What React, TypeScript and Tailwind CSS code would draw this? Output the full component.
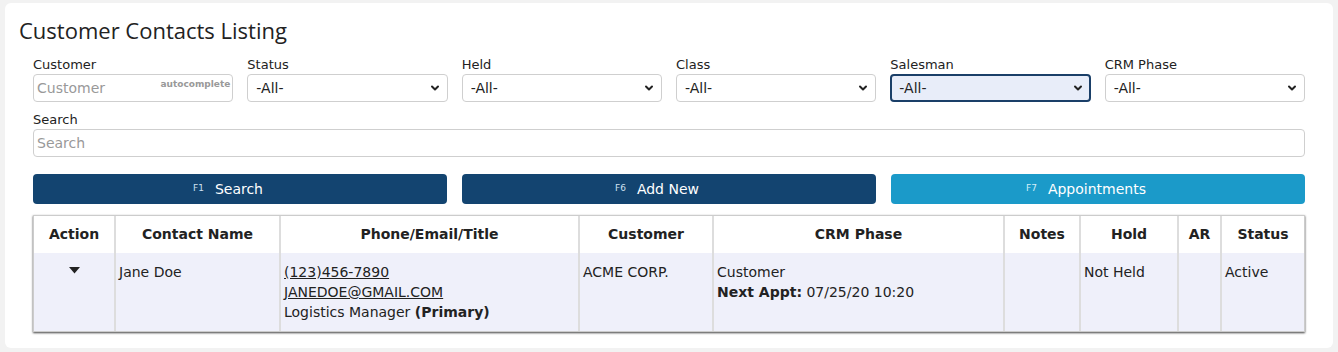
import { ChevronDown } from 'lucide-react'

const filters = ['Status', 'Held', 'Class', 'Salesman', 'CRM Phase']

const cols = [
  { name: 'Action', w: 'w-[80px]' },
  { name: 'Contact Name', w: 'w-[165px]' },
  { name: 'Phone/Email/Title', w: 'w-[299px]' },
  { name: 'Customer', w: 'w-[134px]' },
  { name: 'CRM Phase', w: 'w-[291px]' },
  { name: 'Notes', w: 'w-[76px]' },
  { name: 'Hold', w: 'w-[98px]' },
  { name: 'AR', w: 'w-[43px]' },
  { name: 'Status', w: 'w-[84px]' },
]

function Select({ label, focused }: { label: string; focused?: boolean }) {
  return (
    <div className="flex flex-col">
      <label className="h-[19px] text-[13px] leading-[19px] text-[#222]">{label}</label>
      <div className="relative">
        <select
          className={
            focused
              ? 'h-[28px] w-full appearance-none rounded-[4px] border-2 border-[#1a3f68] bg-[#e8edf9] pl-[7px] text-[14px] text-[#222] outline-none'
              : 'h-[28px] w-full appearance-none rounded-[4px] border border-[#cfcfcf] bg-white pl-[8px] text-[14px] text-[#222] outline-none'
          }
          defaultValue="all"
        >
          <option value="all">-All-</option>
        </select>
        <ChevronDown className="pointer-events-none absolute right-[7px] top-[8px] h-[12px] w-[12px] text-[#222]" strokeWidth={4} />
      </div>
    </div>
  )
}

export default function App() {
  return (
    <div className="min-h-[352px] bg-[#f2f2f2] px-[5px] pt-[3px] pb-[5px] font-['DejaVu_Sans',sans-serif]">
      <div className="rounded-[6px] bg-white pb-[16px]">
        <h1 className="px-[14px] pt-[13px] pb-[10px] font-['Open_Sans',sans-serif] text-[22px] leading-[29px] text-[#222]">
          Customer Contacts Listing
        </h1>
        <div className="px-[28px]">
          <div className="grid grid-cols-6 gap-x-[14px]">
            <div className="flex flex-col">
              <label className="h-[19px] text-[13px] leading-[19px] text-[#222]">Customer</label>
              <div className="relative">
                <input
                  placeholder="Customer"
                  className="h-[28px] w-full rounded-[4px] border border-[#cfcfcf] bg-white pl-[3px] text-[14px] text-[#222] outline-none placeholder:text-[#999]"
                />
                <span className="pointer-events-none absolute right-[3px] top-[4px] text-[9px] font-bold text-[#999]">
                  autocomplete
                </span>
              </div>
            </div>
            {filters.map((f) => (
              <Select key={f} label={f} focused={f === 'Salesman'} />
            ))}
          </div>
          <div className="mt-[8px] flex flex-col">
            <label className="h-[19px] text-[13px] leading-[19px] text-[#222]">Search</label>
            <input
              placeholder="Search"
              className="h-[28px] w-full rounded-[4px] border border-[#cfcfcf] bg-white pl-[3px] text-[14px] text-[#222] outline-none placeholder:text-[#999]"
            />
          </div>
          <div className="mt-[17px] grid grid-cols-3 gap-x-[15px]">
            <button className="flex h-[30px] items-center justify-center gap-[11px] rounded-[4px] bg-[#134470] pr-[24px] text-[14px] text-white">
              <span className="text-[9px] text-[#cfe0f0]">F1</span>Search
            </button>
            <button className="flex h-[30px] items-center justify-center gap-[11px] rounded-[4px] bg-[#134470] pr-[24px] text-[14px] text-white">
              <span className="text-[9px] text-[#cfe0f0]">F6</span>Add New
            </button>
            <button className="flex h-[30px] items-center justify-center gap-[11px] rounded-[4px] bg-[#1b9ac9] pr-[24px] text-[14px] text-white">
              <span className="text-[9px] text-[#d5eef8]">F7</span>Appointments
            </button>
          </div>
          <div className="mt-[11px] border border-[#cccccc] shadow-[0_1px_2px_rgba(0,0,0,0.75)]">
            <div className="flex h-[37px] bg-white text-[14px] font-bold text-[#222]">
              {cols.map((c, i) => (
                <div
                  key={c.name}
                  className={`${c.w} flex shrink-0 items-center justify-center ${i > 0 ? 'border-l-2 border-[#dddddd]' : ''} ${i === cols.length - 1 ? 'grow' : ''}`}
                >
                  {c.name}
                </div>
              ))}
            </div>
            <div className="flex h-[78px] bg-[#eff0fa] text-[14px] leading-[20px] text-[#222]">
              <div className="flex w-[80px] shrink-0 justify-center pt-[14px]">
                <svg width="11" height="7" viewBox="0 0 11 7">
                  <path d="M0 0h11L5.5 6.5z" fill="#222" />
                </svg>
              </div>
              <div className="w-[165px] shrink-0 border-l-2 border-[#dddddd] px-[3px] pt-[9px]">Jane Doe</div>
              <div className="w-[299px] shrink-0 border-l-2 border-[#dddddd] px-[3px] pt-[9px]">
                <div className="underline">(123)456-7890</div>
                <div className="underline">JANEDOE@GMAIL.COM</div>
                <div>
                  Logistics Manager <b>(Primary)</b>
                </div>
              </div>
              <div className="w-[134px] shrink-0 border-l-2 border-[#dddddd] px-[3px] pt-[9px]">ACME CORP.</div>
              <div className="w-[291px] shrink-0 border-l-2 border-[#dddddd] px-[3px] pt-[9px]">
                <div>Customer</div>
                <div>
                  <b>Next Appt:</b> 07/25/20 10:20
                </div>
              </div>
              <div className="w-[76px] shrink-0 border-l-2 border-[#dddddd]" />
              <div className="w-[98px] shrink-0 border-l-2 border-[#dddddd] px-[3px] pt-[9px]">Not Held</div>
              <div className="w-[43px] shrink-0 border-l-2 border-[#dddddd]" />
              <div className="grow border-l-2 border-[#dddddd] px-[3px] pt-[9px]">Active</div>
            </div>
          </div>
        </div>
      </div>
    </div>
  )
}
